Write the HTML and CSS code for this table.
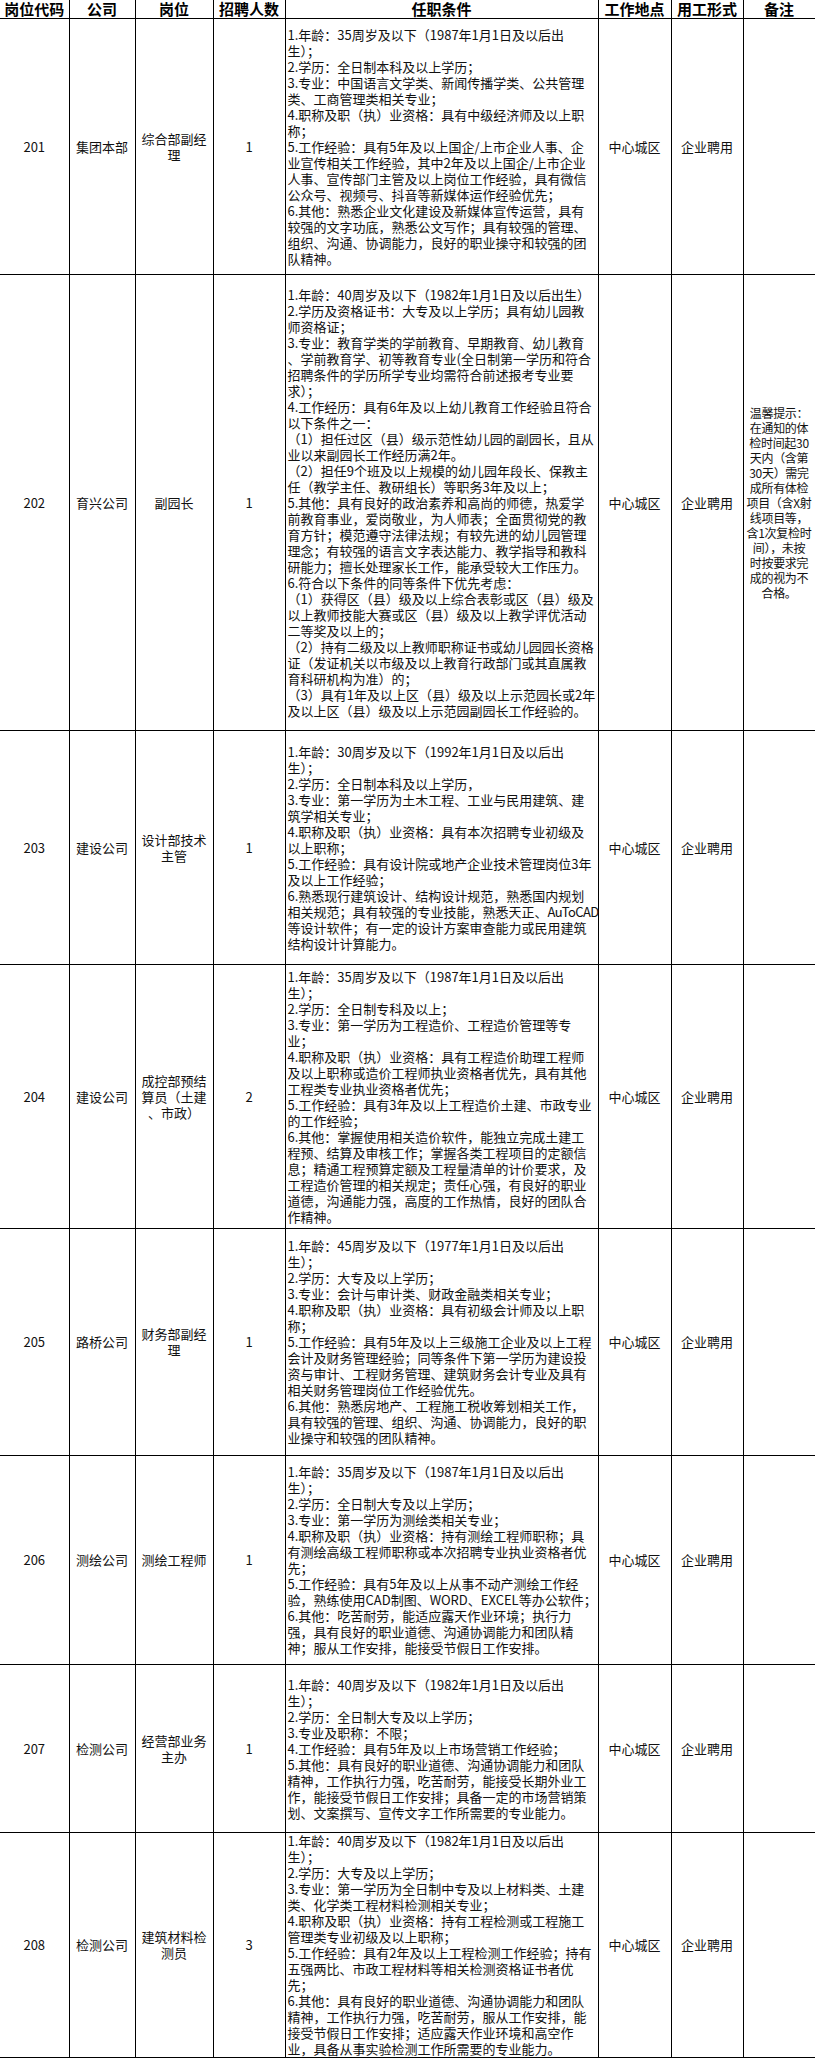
FILE: index.html
```html
<!DOCTYPE html>
<html lang="zh-CN">
<head>
<meta charset="utf-8">
<title>招聘岗位表</title>
<link rel="stylesheet" href="styles.css">
</head>
<body>
<table class="jobs">
  <colgroup>
    <col class="c-code"><col class="c-co"><col class="c-pos"><col class="c-num"><col class="c-req"><col class="c-loc"><col class="c-type"><col class="c-note">
  </colgroup>
  <thead>
    <tr class="head">
      <th>岗位代码</th><th>公司</th><th>岗位</th><th>招聘人数</th><th>任职条件</th><th>工作地点</th><th>用工形式</th><th>备注</th>
    </tr>
  </thead>
  <tbody>
    <tr class="r201">
      <td>201</td><td>集团本部</td><td>综合部副经<br>理</td><td>1</td>
      <td class="req">1.年龄：35周岁及以下（1987年1月1日及以后出<br>生）；<br>2.学历：全日制本科及以上学历；<br>3.专业：中国语言文学类、新闻传播学类、公共管理<br>类、工商管理类相关专业；<br>4.职称及职（执）业资格：具有中级经济师及以上职<br>称；<br>5.工作经验：具有5年及以上国企/上市企业人事、企<br>业宣传相关工作经验，其中2年及以上国企/上市企业<br>人事、宣传部门主管及以上岗位工作经验，具有微信<br>公众号、视频号、抖音等新媒体运作经验优先；<br>6.其他：熟悉企业文化建设及新媒体宣传运营，具有<br>较强的文字功底，熟悉公文写作；具有较强的管理、<br>组织、沟通、协调能力，良好的职业操守和较强的团<br>队精神。</td>
      <td>中心城区</td><td>企业聘用</td><td></td>
    </tr>
    <tr class="r202">
      <td>202</td><td>育兴公司</td><td>副园长</td><td>1</td>
      <td class="req">1.年龄：40周岁及以下（1982年1月1日及以后出生）<br>2.学历及资格证书：大专及以上学历；具有幼儿园教<br>师资格证；<br>3.专业：教育学类的学前教育、早期教育、幼儿教育<br>、学前教育学、初等教育专业(全日制第一学历和符合<br>招聘条件的学历所学专业均需符合前述报考专业要<br>求）；<br>4.工作经历：具有6年及以上幼儿教育工作经验且符合<br>以下条件之一：<br>（1）担任过区（县）级示范性幼儿园的副园长，且从<br>业以来副园长工作经历满2年。<br>（2）担任9个班及以上规模的幼儿园年段长、保教主<br>任（教学主任、教研组长）等职务3年及以上；<br>5.其他：具有良好的政治素养和高尚的师德，热爱学<br>前教育事业，爱岗敬业，为人师表；全面贯彻党的教<br>育方针；模范遵守法律法规；有较先进的幼儿园管理<br>理念；有较强的语言文字表达能力、教学指导和教科<br>研能力；擅长处理家长工作，能承受较大工作压力。<br>6.符合以下条件的同等条件下优先考虑：<br>（1）获得区（县）级及以上综合表彰或区（县）级及<br>以上教师技能大赛或区（县）级及以上教学评优活动<br>二等奖及以上的；<br>（2）持有二级及以上教师职称证书或幼儿园园长资格<br>证（发证机关以市级及以上教育行政部门或其直属教<br>育科研机构为准）的；<br>（3）具有1年及以上区（县）级及以上示范园长或2年<br>及以上区（县）级及以上示范园副园长工作经验的。</td>
      <td>中心城区</td><td>企业聘用</td>
      <td class="note">温馨提示：<br>在通知的体<br>检时间起30<br>天内（含第<br>30天）需完<br>成所有体检<br>项目（含X射<br>线项目等，<br>含1次复检时<br>间），未按<br>时按要求完<br>成的视为不<br>合格。</td>
    </tr>
    <tr class="r203">
      <td>203</td><td>建设公司</td><td>设计部技术<br>主管</td><td>1</td>
      <td class="req">1.年龄：30周岁及以下（1992年1月1日及以后出<br>生）；<br>2.学历：全日制本科及以上学历，<br>3.专业：第一学历为土木工程、工业与民用建筑、建<br>筑学相关专业；<br>4.职称及职（执）业资格：具有本次招聘专业初级及<br>以上职称；<br>5.工作经验：具有设计院或地产企业技术管理岗位3年<br>及以上工作经验；<br>6.熟悉现行建筑设计、结构设计规范，熟悉国内规划<br>相关规范；具有较强的专业技能，熟悉天正、<span class="tight">AuToCAD</span><br>等设计软件；有一定的设计方案审查能力或民用建筑<br>结构设计计算能力。</td>
      <td>中心城区</td><td>企业聘用</td><td></td>
    </tr>
    <tr class="r204">
      <td>204</td><td>建设公司</td><td>成控部预结<br>算员（土建<br>、市政）</td><td>2</td>
      <td class="req">1.年龄：35周岁及以下（1987年1月1日及以后出<br>生）；<br>2.学历：全日制专科及以上；<br>3.专业：第一学历为工程造价、工程造价管理等专<br>业；<br>4.职称及职（执）业资格：具有工程造价助理工程师<br>及以上职称或造价工程师执业资格者优先，具有其他<br>工程类专业执业资格者优先；<br>5.工作经验：具有3年及以上工程造价土建、市政专业<br>的工作经验；<br>6.其他：掌握使用相关造价软件，能独立完成土建工<br>程预、结算及审核工作；掌握各类工程项目的定额信<br>息；精通工程预算定额及工程量清单的计价要求，及<br>工程造价管理的相关规定；责任心强，有良好的职业<br>道德，沟通能力强，高度的工作热情，良好的团队合<br>作精神。</td>
      <td>中心城区</td><td>企业聘用</td><td></td>
    </tr>
    <tr class="r205">
      <td>205</td><td>路桥公司</td><td>财务部副经<br>理</td><td>1</td>
      <td class="req">1.年龄：45周岁及以下（1977年1月1日及以后出<br>生）；<br>2.学历：大专及以上学历；<br>3.专业：会计与审计类、财政金融类相关专业；<br>4.职称及职（执）业资格：具有初级会计师及以上职<br>称；<br>5.工作经验：具有5年及以上三级施工企业及以上工程<br>会计及财务管理经验；同等条件下第一学历为建设投<br>资与审计、工程财务管理、建筑财务会计专业及具有<br>相关财务管理岗位工作经验优先。<br>6.其他：熟悉房地产、工程施工税收筹划相关工作，<br>具有较强的管理、组织、沟通、协调能力，良好的职<br>业操守和较强的团队精神。</td>
      <td>中心城区</td><td>企业聘用</td><td></td>
    </tr>
    <tr class="r206">
      <td>206</td><td>测绘公司</td><td>测绘工程师</td><td>1</td>
      <td class="req">1.年龄：35周岁及以下（1987年1月1日及以后出<br>生）；<br>2.学历：全日制大专及以上学历；<br>3.专业：第一学历为测绘类相关专业；<br>4.职称及职（执）业资格：持有测绘工程师职称；具<br>有测绘高级工程师职称或本次招聘专业执业资格者优<br>先；<br>5.工作经验：具有5年及以上从事不动产测绘工作经<br>验，熟练使用CAD制图、WORD、EXCEL等办公软件；<br>6.其他：吃苦耐劳，能适应露天作业环境；执行力<br>强，具有良好的职业道德、沟通协调能力和团队精<br>神；服从工作安排，能接受节假日工作安排。</td>
      <td>中心城区</td><td>企业聘用</td><td></td>
    </tr>
    <tr class="r207">
      <td>207</td><td>检测公司</td><td>经营部业务<br>主办</td><td>1</td>
      <td class="req">1.年龄：40周岁及以下（1982年1月1日及以后出<br>生）；<br>2.学历：全日制大专及以上学历；<br>3.专业及职称：不限；<br>4.工作经验：具有5年及以上市场营销工作经验；<br>5.其他：具有良好的职业道德、沟通协调能力和团队<br>精神，工作执行力强，吃苦耐劳，能接受长期外业工<br>作，能接受节假日工作安排；具备一定的市场营销策<br>划、文案撰写、宣传文字工作所需要的专业能力。</td>
      <td>中心城区</td><td>企业聘用</td><td></td>
    </tr>
    <tr class="r208">
      <td>208</td><td>检测公司</td><td>建筑材料检<br>测员</td><td>3</td>
      <td class="req">1.年龄：40周岁及以下（1982年1月1日及以后出<br>生）；<br>2.学历：大专及以上学历；<br>3.专业：第一学历为全日制中专及以上材料类、土建<br>类、化学类工程材料检测相关专业；<br>4.职称及职（执）业资格：持有工程检测或工程施工<br>管理类专业初级及以上职称；<br>5.工作经验：具有2年及以上工程检测工作经验；持有<br>五强两比、市政工程材料等相关检测资格证书者优<br>先；<br>6.其他：具有良好的职业道德、沟通协调能力和团队<br>精神，工作执行力强，吃苦耐劳，服从工作安排，能<br>接受节假日工作安排；适应露天作业环境和高空作<br>业，具备从事实验检测工作所需要的专业能力。</td>
      <td>中心城区</td><td>企业聘用</td><td></td>
    </tr>
  </tbody>
</table>
</body>
</html>
```

FILE: styles.css
```css
html, body {
  margin: 0;
  padding: 0;
  background: #ffffff;
}
body {
  font-family: "Noto Sans CJK SC", "Noto Sans", sans-serif;
  color: #111111;
}
.jobs {
  border-collapse: collapse;
  table-layout: fixed;
  width: 815px;
}
.c-code { width: 69px; }
.c-co { width: 66px; }
.c-pos { width: 78px; }
.c-num { width: 72px; }
.c-req { width: 313px; }
.c-loc { width: 73px; }
.c-type { width: 72px; }
.c-note { width: 72px; }

.jobs th,
.jobs td {
  border: 1px solid #000;
  padding: 0;
  vertical-align: middle;
  text-align: center;
  white-space: nowrap;
}
.jobs tr > :first-child { border-left: none; }
.jobs thead th { border-top: none; }

.head th {
  height: 18px;
  font-size: 15px;
  line-height: 18px;
  font-weight: 700;
  color: #000;
  padding-top: 0;
}
.jobs td {
  font-size: 13px;
  line-height: 16px;
}
.jobs td.req {
  text-align: left;
  padding-left: 2px;
  line-height: 16px;
}
.tight {
  letter-spacing: -0.6px;
}
.jobs td.note {
  font-size: 12px;
  line-height: 15px;
  letter-spacing: -0.3px;
}
.r201 td { height: 255px; }
.r202 td { height: 455px; }
.r203 td { height: 233px; }
.r204 td { height: 263px; }
.r205 td { height: 226px; }
.r206 td { height: 208px; }
.r207 td { height: 167px; }
.r208 td { height: 224px; }
```
